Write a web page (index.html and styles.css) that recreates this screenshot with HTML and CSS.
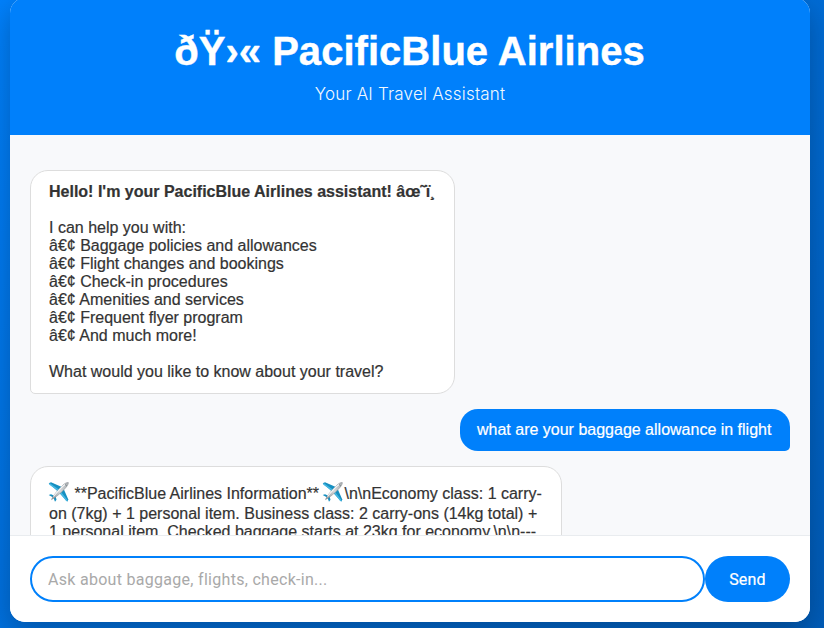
FILE: index.html
```html
<!DOCTYPE html>
<html lang="en">
<head>
<meta charset="utf-8">
<title>PacificBlue Airlines</title>
<link rel="stylesheet" href="styles.css">
</head>
<body>
<svg width="0" height="0" class="defs" aria-hidden="true">
  <defs>
    <linearGradient id="metal" x1="0" y1="1" x2="1" y2="0">
      <stop offset="0" stop-color="#8b9095"/><stop offset=".5" stop-color="#d5d8da"/><stop offset="1" stop-color="#a9adb0"/>
    </linearGradient>
    <symbol id="plane" viewBox="0 0 20 20">
      <path d="M.2 1.300 2.500 .3 14.500 5.500 10.500 10.500Z" fill="#168fc0"/>
      <path d="M9.500 9.500 14.500 5.500 19.800 17.500 18.800 19.800Z" fill="#168fc0"/>
      <path d="M1 1.800 10.500 8.500 18.500 18.800" fill="none" stroke="#45b8e3" stroke-width="1.600"/>
      <path d="M.2 13 2.500 12.300 7 14.300 6 16.300Z M4.500 14.500 6.800 13.300 8 17.800 6.500 19.800Z" fill="#168fc0"/>
      <path d="M3 17.600C4.500 13.500 10 7.500 15 2.600 17 .7 19.500 .2 19.800 .5 20.100 1 19.500 3.200 17.700 5.200 13 10.500 7 15.800 3 17.600Z" fill="url(#metal)" stroke="#85898d" stroke-width=".5"/>
      <path d="M5 14.500C9 9.500 14 4 17 2.200" fill="none" stroke="#f5f6f7" stroke-width="1.100"/>
      <path d="M16.500 2.300 18.300 4" stroke="#53636d" stroke-width=".7"/>
    </symbol>
  </defs>
</svg>
<main class="chat">
  <header class="chat-header">
    <h1>ðŸ›« PacificBlue Airlines</h1>
    <p>Your AI Travel Assistant</p>
  </header>
  <section class="messages">
    <div class="message bot"><strong>Hello! I'm your PacificBlue Airlines assistant! âœ˜ï¸</strong><br><br>I can help you with:<br>â€¢ Baggage policies and allowances<br>â€¢ Flight changes and bookings<br>â€¢ Check-in procedures<br>â€¢ Amenities and services<br>â€¢ Frequent flyer program<br>â€¢ And much more!<br><br>What would you like to know about your travel?</div>
    <div class="message user">what are your baggage allowance in flight</div>
    <div class="message bot reply"><span class="lead"><svg class="plane"><use href="#plane"/></svg> **PacificBlue Airlines Information** <svg class="plane"><use href="#plane"/></svg>\n\nEconomy class: 1 carry-</span>on (7kg) + 1 personal item. Business class: 2 carry-ons (14kg total) +<br>1 personal item. Checked baggage starts at 23kg for economy.\n\n---</div>
  </section>
  <form class="composer">
    <input type="text" placeholder="Ask about baggage, flights, check-in...">
    <button type="button">Send</button>
  </form>
</main>
</body>
</html>
```
FILE: styles.css
```css
* {
  box-sizing: border-box;
}

html {
  height: 100%;
  overflow: hidden;
}

body {
  height: 628px;
  margin: 0;
  padding: 0 14px 6px 10px;
  overflow: hidden;
  font-family: "Liberation Sans", Arial, sans-serif;
  background: linear-gradient(135deg, #0080fb 0%, #005cb8 100%);
}

.defs {
  display: block;
}

.chat {
  display: flex;
  flex-direction: column;
  height: 624px;
  margin-top: -2px;
  overflow: hidden;
  border-radius: 15px;
  background: #fff;
  box-shadow: 0 10px 30px rgba(0, 0, 0, 0.25);
}

.chat-header {
  flex: 0 0 137px;
  padding-top: 30px;
  text-align: center;
  color: #fff;
  background: #0080fb;
}

.chat-header h1 {
  margin: 0;
  padding-right: 1px;
  font-size: 40px;
  line-height: 46px;
  letter-spacing: 0.03px;
  font-variant-ligatures: none;
  -webkit-text-stroke: 0.4px;
}

.chat-header p {
  margin: 10px 0 0;
  font-family: Inter, sans-serif;
  font-size: 17px;
  font-weight: 300;
  line-height: 20px;
  letter-spacing: 0.2px;
  opacity: 0.95;
}

.messages {
  display: flex;
  flex: 1;
  flex-direction: column;
  gap: 15px;
  align-items: flex-start;
  min-height: 0;
  padding: 35px 20px 0;
  overflow: hidden;
  background: #f8f9fb;
}

.message {
  flex: none;
  padding: 12px 18px;
  font-size: 16px;
  line-height: 18px;
  white-space: nowrap;
  color: #333;
  -webkit-text-stroke: 0.2px;
}

.bot {
  width: 425px;
  height: 224px;
  border: 1px solid #ddd;
  border-radius: 18px 18px 18px 5px;
  background: #fff;
}

.user {
  align-self: flex-end;
  width: 330px;
  height: 42px;
  padding: 12px 17px;
  border-radius: 18px 18px 5px 18px;
  color: #fff;
  background: #0080fb;
}

.reply {
  width: 532px;
  height: 120px;
  padding-top: 15px;
}

.lead {
  display: block;
  height: 23px;
  line-height: 22px;
}

.plane {
  width: 21px;
  height: 20px;
  margin-left: -1px;
  margin-right: 1px;
  vertical-align: -3px;
}

.composer {
  display: flex;
  flex: 0 0 87px;
  padding: 20px;
  border-top: 1px solid #e9ecef;
  background: #fff;
}

.composer input {
  flex: 1;
  min-width: 0;
  height: 46px;
  padding: 0 16px;
  border: 2px solid #0080fb;
  border-radius: 23px;
  outline: none;
  font-family: Roboto, sans-serif;
  font-size: 16px;
  letter-spacing: 0.29px;
}

.composer input::placeholder {
  color: #a9a9a9;
}

.composer button {
  width: 85px;
  height: 46px;
  padding: 0;
  border: 0;
  border-radius: 23px;
  font-family: Roboto, sans-serif;
  font-size: 16px;
  letter-spacing: 0.2px;
  color: #fff;
  background: #0080fb;
  -webkit-text-stroke: 0.2px;
}
```
